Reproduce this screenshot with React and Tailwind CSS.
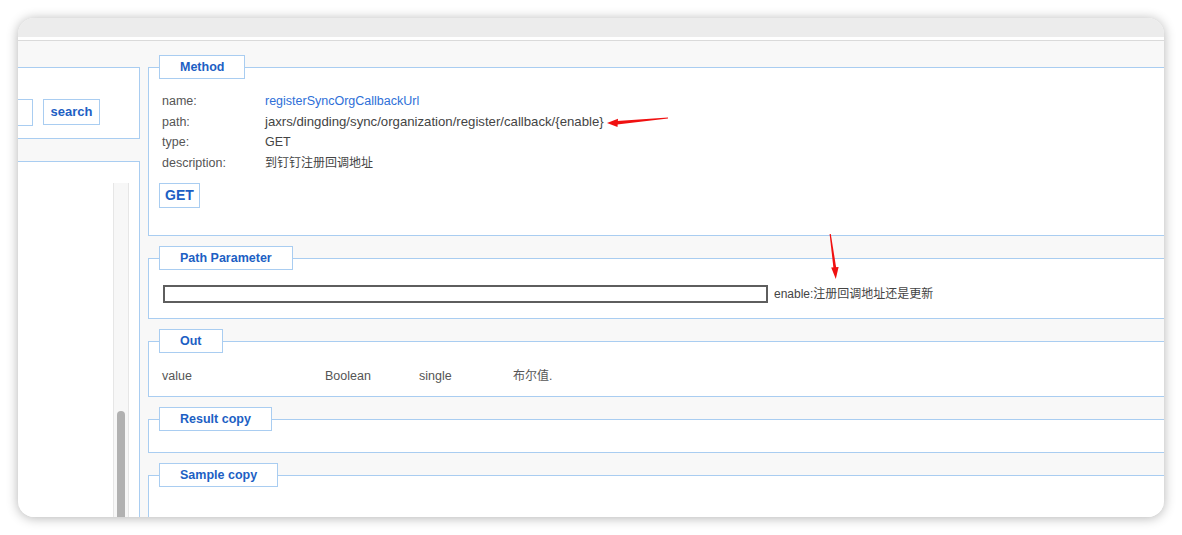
import React from "react";

const font = "font-['Liberation_Sans','Noto_Sans_CJK_SC',sans-serif]";

function Box({ title, children, className = "" }) {
  return (
    <fieldset className={`border border-r-0 border-[#a9cdf1] bg-white pl-[10px] ${className}`}>
      <legend className="h-[24px] border border-[#a9cdf1] bg-white px-[20px] text-[12.5px] font-bold leading-[22px] text-[#1d5fc4]">
        {title}
      </legend>
      {children}
    </fieldset>
  );
}

export default function App() {
  const rows = [
    ["name:", "registerSyncOrgCallbackUrl", "text-[12.5px] text-[#2e6fd8]"],
    ["path:", "jaxrs/dingding/sync/organization/register/callback/{enable}", "text-[13.2px] text-[#444]"],
    ["type:", "GET", "text-[12.5px] text-[#444]"],
    ["description:", "到钉钉注册回调地址", "text-[12px] text-[#444]"],
  ];

  return (
    <div className={`relative h-[535px] w-[1182px] bg-white p-[18px] ${font}`}>
      <div className="flex h-[499px] w-[1146px] flex-col overflow-hidden rounded-[16px] bg-[#f8f8f8] shadow-[0_1px_12px_rgba(0,0,0,0.3)]">
        {/* window bar */}
        <div className="h-[19px] shrink-0 bg-[#ececec]" />
        <div className="h-[4px] shrink-0 border-b border-[#dadada] bg-white" />

        <div className="flex min-h-0 flex-1">
          {/* sidebar */}
          <div className="flex w-[122px] shrink-0 flex-col">
            <div className="mt-[26px] h-[72px] shrink-0 border-y border-r border-[#a9cdf1] bg-white pt-[31px]">
              <div className="flex items-start gap-[10px]">
                <div className="h-[27px] w-[15px] border-y border-r border-[#a9cdf1] bg-white" />
                <button className="h-[26px] w-[57px] border border-[#a9cdf1] bg-white text-[13px] font-bold text-[#1d5fc4]">
                  search
                </button>
              </div>
            </div>
            <div className="mt-[22px] flex min-h-0 flex-1 justify-end overflow-hidden border-t border-r border-[#a9cdf1] bg-white pr-[10px] pt-[21px]">
              <div className="flex w-[16px] justify-center border-x border-[#e6e6e6] bg-[#f7f7f7]">
                <div className="mt-[228px] h-[140px] w-[8px] shrink-0 rounded-t-full bg-[#b1b1b1]" />
              </div>
            </div>
          </div>

          {/* main */}
          <div className="ml-[8px] flex min-w-0 flex-1 flex-col gap-[10px] pt-[14px]">
            <Box title="Method" className="shrink-0">
              <div className="mt-[12px] pl-[3px] leading-[20.5px]">
                {rows.map(([k, v, cls]) => (
                  <div key={k} className="flex">
                    <span className="w-[103px] text-[12.5px] text-[#555]">{k}</span>
                    <span className={cls}>{v}</span>
                  </div>
                ))}
              </div>
              <button className="mt-[10px] h-[25px] w-[41px] border border-[#a9cdf1] bg-white text-[14px] font-bold text-[#1d5fc4]">
                GET
              </button>
              <div className="h-[27px]" />
            </Box>

            <Box title="Path Parameter" className="shrink-0">
              <div className="mt-[15px] mb-[15px] flex items-center pl-[4px]">
                <div className="h-[18px] w-[605px] border-2 border-[#5e5e5e] bg-white" />
                <span className="ml-[6px] text-[12px] text-[#444]">enable:注册回调地址还是更新</span>
              </div>
            </Box>

            <Box title="Out" className="shrink-0">
              <div className="mt-[13px] mb-[10px] flex pl-[3px] text-[12.5px] leading-[20px] text-[#555]">
                <span className="w-[163px]">value</span>
                <span className="w-[94px]">Boolean</span>
                <span className="w-[94px]">single</span>
                <span className="text-[12px]">布尔值.</span>
              </div>
            </Box>

            <Box title="Result copy" className="shrink-0">
              <div className="h-[21px]" />
            </Box>

            <Box title="Sample copy" className="shrink-0">
              <div className="h-[60px]" />
            </Box>
          </div>
        </div>
      </div>

      {/* red annotation arrows */}
      <svg className="pointer-events-none absolute inset-0" width="1182" height="535" viewBox="0 0 1182 535">
        <polygon points="668,117.6 668,118.6 617,124.6 617,121" fill="#f01010" />
        <polygon points="607,123 618,118.8 617.5,127" fill="#f01010" />
        <polygon points="829.6,234 830.8,234 836.4,269 833.6,269.4" fill="#f01010" />
        <polygon points="835.8,279 831.2,267.5 838.6,267" fill="#f01010" />
      </svg>
    </div>
  );
}
